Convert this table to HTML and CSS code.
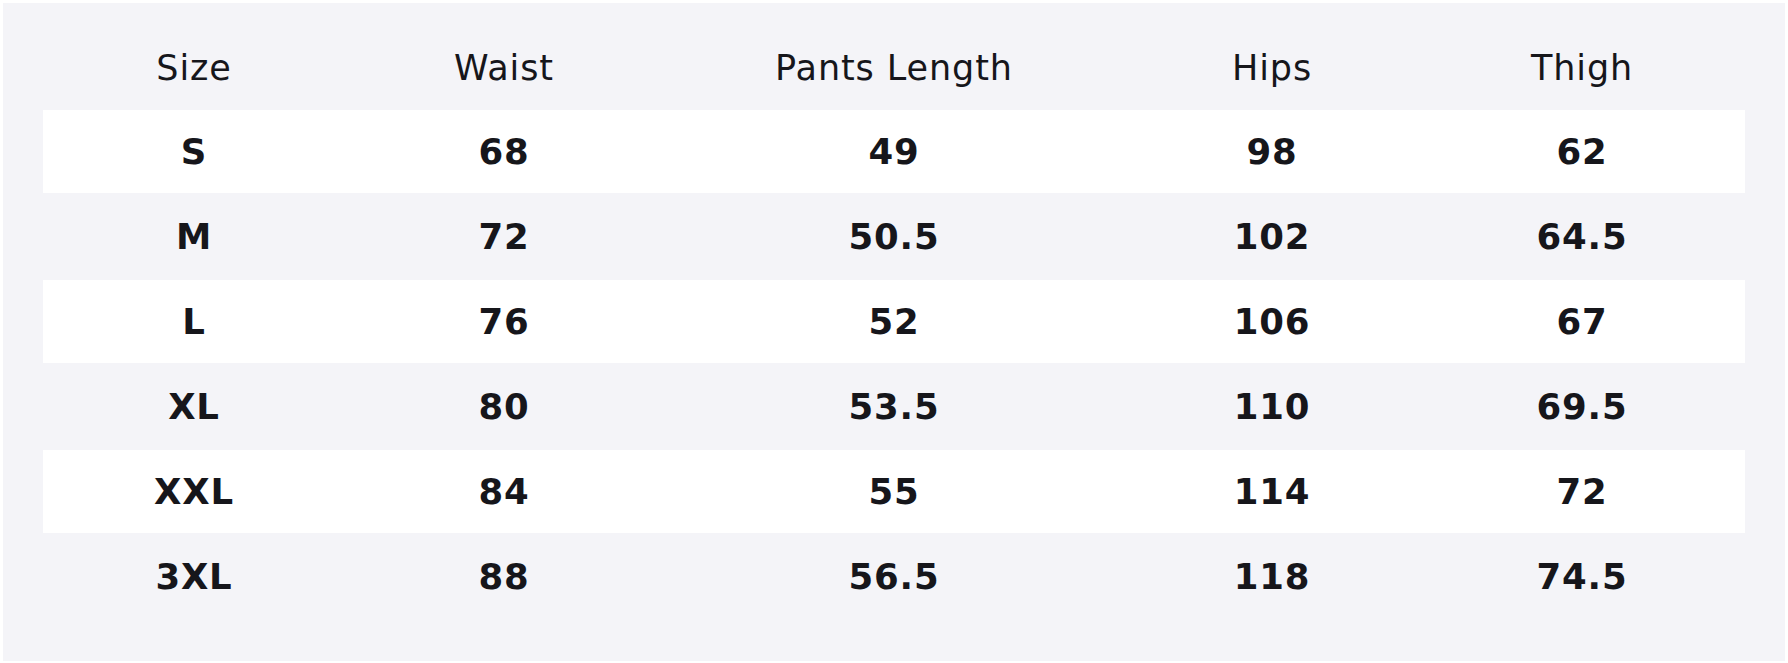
FILE: index.html
```html
<!DOCTYPE html>
<html>
<head>
<meta charset="utf-8">
<link rel="stylesheet" href="styles.css">
</head>
<body>
<div class="panel">
  <table class="sizes">
    <colgroup>
      <col class="c1"><col class="c2"><col class="c3"><col class="c4"><col class="c5">
    </colgroup>
    <thead>
      <tr class="head"><th>Size</th><th>Waist</th><th>Pants Length</th><th>Hips</th><th>Thigh</th></tr>
    </thead>
    <tbody>
      <tr class="light"><td>S</td><td>68</td><td>49</td><td>98</td><td>62</td></tr>
      <tr class="dark"><td>M</td><td>72</td><td>50.5</td><td>102</td><td>64.5</td></tr>
      <tr class="light"><td>L</td><td>76</td><td>52</td><td>106</td><td>67</td></tr>
      <tr class="dark"><td>XL</td><td>80</td><td>53.5</td><td>110</td><td>69.5</td></tr>
      <tr class="light"><td>XXL</td><td>84</td><td>55</td><td>114</td><td>72</td></tr>
      <tr class="dark"><td>3XL</td><td>88</td><td>56.5</td><td>118</td><td>74.5</td></tr>
    </tbody>
  </table>
</div>
</body>
</html>
```

FILE: styles.css
```css
html, body {
  margin: 0;
  padding: 0;
  background: #ffffff;
}
body {
  padding: 3px;
  font-family: "DejaVu Sans", sans-serif;
  color: #16161b;
}
.panel {
  width: 1782px;
  height: 658px;
  box-sizing: border-box;
  background: #f4f4f8;
  padding: 0 40px;
}
.sizes {
  width: 1702px;
  border-collapse: collapse;
  table-layout: fixed;
}
.c1 { width: 302px; }
.c2 { width: 318px; }
.c3 { width: 462px; }
.c4 { width: 294px; }
.c5 { width: 326px; }
th, td {
  padding: 0;
  text-align: center;
  vertical-align: middle;
  font-size: 35px;
}
th {
  font-weight: normal;
  height: 107px;
  padding-top: 22px;
  box-sizing: border-box;
  letter-spacing: 0.9px;
}
td {
  font-weight: bold;
  font-size: 35.5px;
  letter-spacing: 0.8px;
}
.light td {
  background: #ffffff;
  height: 83.3px;
}
.dark td {
  height: 86.7px;
}
```
